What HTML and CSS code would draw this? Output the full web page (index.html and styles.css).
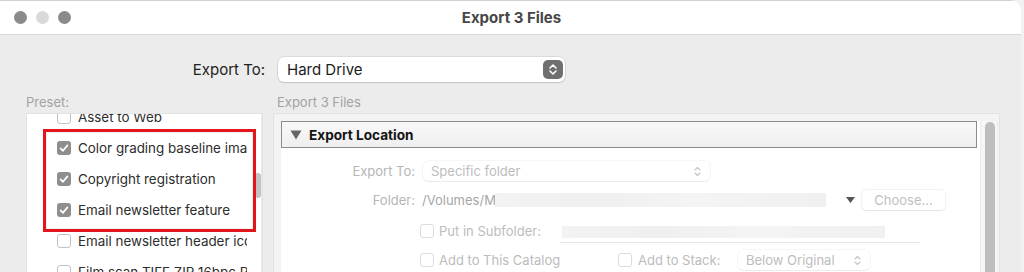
FILE: index.html
```html
<!DOCTYPE html>
<html>
<head>
<meta charset="utf-8">
<title>Export 3 Files</title>
<link rel="stylesheet" href="styles.css">
</head>
<body>
<div class="window">
  <header class="titlebar">
    <div class="lights">
      <span class="light dark"></span>
      <span class="light pale"></span>
      <span class="light dark"></span>
    </div>
    <div class="title">Export 3 Files</div>
  </header>
  <main class="body">
    <div class="export-row">
      <span class="export-label">Export To:</span>
      <div class="main-popup">
        <span class="main-popup-text">Hard Drive</span>
        <span class="stepper">
          <svg width="10" height="13" viewBox="0 0 10 13"><path d="M2 5 L5 2 L8 5 M2 8 L5 11 L8 8" fill="none" stroke="#fff" stroke-width="1.6" stroke-linecap="round" stroke-linejoin="round"/></svg>
        </span>
      </div>
    </div>
    <div class="columns">
      <section class="left">
        <div class="col-label">Preset:</div>
        <div class="listbox">
          <div class="rows">
            <div class="rows-inner">
              <div class="row"><span class="cb"></span><span class="row-text">Asset to Web</span></div>
              <div class="row"><span class="cb checked"><svg width="14" height="14" viewBox="0 0 14 14"><path d="M3.6 7.4 L6 9.8 L10.4 4.4" fill="none" stroke="#fff" stroke-width="1.7" stroke-linecap="round" stroke-linejoin="round"/></svg></span><span class="row-text">Color grading baseline images</span></div>
              <div class="row"><span class="cb checked"><svg width="14" height="14" viewBox="0 0 14 14"><path d="M3.6 7.4 L6 9.8 L10.4 4.4" fill="none" stroke="#fff" stroke-width="1.7" stroke-linecap="round" stroke-linejoin="round"/></svg></span><span class="row-text">Copyright registration</span></div>
              <div class="row"><span class="cb checked"><svg width="14" height="14" viewBox="0 0 14 14"><path d="M3.6 7.4 L6 9.8 L10.4 4.4" fill="none" stroke="#fff" stroke-width="1.7" stroke-linecap="round" stroke-linejoin="round"/></svg></span><span class="row-text">Email newsletter feature</span></div>
              <div class="row"><span class="cb"></span><span class="row-text">Email newsletter header icons</span></div>
              <div class="row"><span class="cb"></span><span class="row-text">Film scan TIFF ZIP 16bpc ProPhoto</span></div>
            </div>
          </div>
          <div class="track"><div class="thumb"></div></div>
          <div class="highlight"></div>
        </div>
      </section>
      <section class="right">
        <div class="col-label right-label">Export 3 Files</div>
        <div class="panel">
          <div class="scrollview">
            <div class="content">
              <div class="section-head">
                <svg class="disclosure" width="12" height="10" viewBox="0 0 12 10"><path d="M0.5 0.5 H11.5 L6 9.5 Z" fill="#666"/></svg>
                <span class="section-title">Export Location</span>
              </div>
              <div class="form">
                <div class="frow">
                  <span class="flabel">Export To:</span>
                  <div class="mini-popup wide-popup">
                    <span>Specific folder</span>
                    <svg class="chev" width="7" height="11" viewBox="0 0 7 11"><path d="M1 4 L3.5 1.5 L6 4 M1 7 L3.5 9.5 L6 7" fill="none" stroke="#c4c4c4" stroke-width="1.1" stroke-linecap="round" stroke-linejoin="round"/></svg>
                  </div>
                </div>
                <div class="frow">
                  <span class="flabel">Folder:</span>
                  <span class="path">/Volumes/M</span>
                  <span class="blur path-blur"></span>
                  <svg class="folder-tri" width="9" height="6" viewBox="0 0 9 6"><path d="M0 0 H9 L4.5 6 Z" fill="#555"/></svg>
                  <div class="button">Choose...</div>
                </div>
                <div class="frow frow-sub">
                  <span class="indent"></span>
                  <span class="cb disabled"></span>
                  <span class="dtext sub-label">Put in Subfolder:</span>
                  <div class="sub-field"><span class="blur sub-blur"></span></div>
                </div>
                <div class="frow">
                  <span class="indent"></span>
                  <span class="cb disabled"></span>
                  <span class="dtext catalog-label">Add to This Catalog</span>
                  <span class="cb disabled"></span>
                  <span class="dtext stack-label">Add to Stack:</span>
                  <div class="mini-popup stack-popup">
                    <span>Below Original</span>
                    <svg class="chev" width="7" height="11" viewBox="0 0 7 11"><path d="M1 4 L3.5 1.5 L6 4 M1 7 L3.5 9.5 L6 7" fill="none" stroke="#c4c4c4" stroke-width="1.1" stroke-linecap="round" stroke-linejoin="round"/></svg>
                  </div>
                </div>
              </div>
            </div>
            <div class="vtrack"><div class="vthumb"></div></div>
          </div>
        </div>
      </section>
    </div>
  </main>
</div>
</body>
</html>
```

FILE: styles.css
```css
* { box-sizing: border-box; }

html, body {
  margin: 0;
  padding: 0;
  background: #f2f2f2;
  overflow: hidden;
}

body {
  font-family: Inter, "Noto Sans", "Liberation Sans", sans-serif;
  font-size: 13px;
  color: #2a2a2a;
}

.window {
  width: 1021px;
  height: 272px;
  background: #ececec;
  border-top-right-radius: 10px;
  overflow: hidden;
  display: flex;
  flex-direction: column;
}

/* Title bar */
.titlebar {
  height: 35px;
  flex: none;
  background: #fff;
  border-top: 1px solid #d2d2d2;
  border-bottom: 1px solid #d8d8d8;
  display: flex;
  align-items: center;
  position: relative;
}

.lights {
  display: flex;
  gap: 9px;
  padding-left: 14px;
}

.light {
  width: 13px;
  height: 13px;
  border-radius: 50%;
}

.light.dark { background: #8b8b8b; }
.light.pale { background: #d9d9d9; }

.title {
  position: absolute;
  left: 0;
  right: 0;
  top: 0;
  bottom: 0;
  display: flex;
  align-items: center;
  justify-content: center;
  font-weight: 700;
  font-size: 15px;
  color: #474747;
  padding-left: 2px;
}

/* Body */
.body {
  flex: 1;
  display: flex;
  flex-direction: column;
  min-height: 0;
}

.export-row {
  display: flex;
  align-items: center;
  padding-top: 22px;
}

.export-label {
  width: 265px;
  text-align: right;
  margin-right: 13px;
  font-size: 15px;
  color: #222;
}

.main-popup {
  width: 287px;
  height: 25px;
  background: #fff;
  border-radius: 6px;
  box-shadow: 0 0 0 0.5px rgba(0, 0, 0, 0.14), 0 1px 1.5px rgba(0, 0, 0, 0.12);
  display: flex;
  align-items: center;
  justify-content: space-between;
  padding: 0 2px 0 9px;
}

.main-popup-text {
  font-size: 15px;
  color: #1c1c1c;
}

.stepper {
  width: 20px;
  height: 19px;
  border-radius: 5px;
  background: #6f6f6f;
  display: flex;
  align-items: center;
  justify-content: center;
}

.columns {
  display: flex;
  margin-top: 13px;
  flex: 1;
  min-height: 0;
}

.col-label {
  height: 14px;
  line-height: 14px;
  font-size: 13px;
  color: #a2a2a2;
  margin-bottom: 4px;
}

/* Left preset list */
.left {
  padding-left: 26px;
  flex: none;
}

.listbox {
  position: relative;
  width: 237px;
  height: 170px;
  background: #fff;
  border: 1px solid #e2e2e2;
  border-bottom: none;
  display: flex;
}

.rows {
  width: 221px;
  overflow: hidden;
}

.rows-inner {
  margin-top: -13px;
}

.row {
  height: 31px;
  display: flex;
  align-items: center;
  padding-left: 30px;
  white-space: nowrap;
  color: #2d2d2d;
  font-size: 13.4px;
}

.row-text {
  margin-left: 7px;
}

.cb {
  flex: none;
  width: 14px;
  height: 14px;
  border-radius: 3px;
  border: 1px solid #c2c2c2;
  background: #fff;
  display: inline-flex;
}

.cb.checked {
  border: none;
  background: #8e8e8e;
}

.track {
  width: 15px;
  background: #fff;
  border-right: 1px solid #e8e8e8;
}

.thumb {
  margin-top: 59px;
  margin-left: 8px;
  width: 6px;
  height: 25px;
  border-radius: 3px;
  background: #c3c3c3;
}

.highlight {
  position: absolute;
  left: 16px;
  top: 15px;
  width: 213px;
  height: 103px;
  border: 3px solid #e2151c;
  box-shadow: inset 0 0 0 1px rgba(0, 0, 0, 0.06);
  pointer-events: none;
}

/* Right panel */
.right {
  margin-left: 10px;
  flex: none;
}

.right-label {
  padding-left: 4px;
}

.panel {
  width: 727px;
  height: 170px;
  background: #f3f3f3;
  border: 1px solid #e3e3e3;
  border-bottom: none;
  padding: 7px 1px 0 7px;
}

.scrollview {
  display: flex;
  height: 100%;
}

.content {
  flex: 1;
  background: #fff;
}

.section-head {
  height: 27px;
  margin-right: 3px;
  border: 1px solid #8b8b8b;
  background: linear-gradient(#f8f8f8, #efefef);
  display: flex;
  align-items: center;
  padding-left: 8px;
  gap: 7px;
}

.section-title {
  font-weight: 700;
  font-size: 13.6px;
  color: #141414;
}

.vtrack {
  width: 18px;
  flex: none;
  background: #f6f6f6;
  border-left: 1px solid #ededed;
  border-right: 1px solid #ededed;
}

.vthumb {
  margin: 1px 0 0 4px;
  width: 10px;
  height: 200px;
  border-radius: 5px;
  background: #bebebe;
}

/* Disabled form */
.form {
  display: flex;
  flex-direction: column;
  gap: 9px;
  padding-top: 13px;
  color: #b9b9b9;
}

.frow {
  height: 20px;
  display: flex;
  align-items: center;
  white-space: nowrap;
}

.frow-sub {
  margin-top: 2px;
}

.flabel {
  width: 134px;
  text-align: right;
  margin-right: 8px;
  color: #b6b6b6;
}

.mini-popup {
  height: 20px;
  border-radius: 5px;
  background: #fff;
  box-shadow: 0 0 0 0.5px rgba(0, 0, 0, 0.07), 0 1px 1px rgba(0, 0, 0, 0.05);
  display: flex;
  align-items: center;
  justify-content: space-between;
  padding: 0 9px 0 8px;
  color: #bdbdbd;
}

.wide-popup { width: 287px; }
.stack-popup { width: 132px; }

.path {
  color: #a6a6a6;
  margin-left: -1px;
  width: 73px;
}

.blur {
  display: block;
  background: linear-gradient(90deg, #f3f3f3, #efefef 30%, #f4f4f4 60%, #f0f0f0);
  filter: blur(0.6px);
}

.path-blur {
  width: 331px;
  height: 14px;
}

.folder-tri {
  margin-left: 20px;
}

.button {
  margin-left: 7px;
  width: 83px;
  height: 20px;
  border-radius: 4px;
  background: #fff;
  box-shadow: 0 0 0 0.5px rgba(0, 0, 0, 0.1), 0 1px 1px rgba(0, 0, 0, 0.06);
  display: flex;
  align-items: center;
  justify-content: center;
  color: #c0c0c0;
}

.indent {
  width: 139px;
  flex: none;
}

.cb.disabled {
  border-color: #dcdcdc;
}

.dtext {
  margin-left: 5px;
  color: #bcbcbc;
}

.sub-label { width: 121px; }
.catalog-label { width: 179px; }
.stack-label { width: 100px; margin-left: 6px; }

.sub-field {
  width: 360px;
  height: 22px;
  margin-top: 2px;
  border-bottom: 1px solid #e6e6e6;
  display: flex;
  align-items: center;
  padding-left: 2px;
}

.sub-blur {
  width: 323px;
  height: 12px;
}
```
